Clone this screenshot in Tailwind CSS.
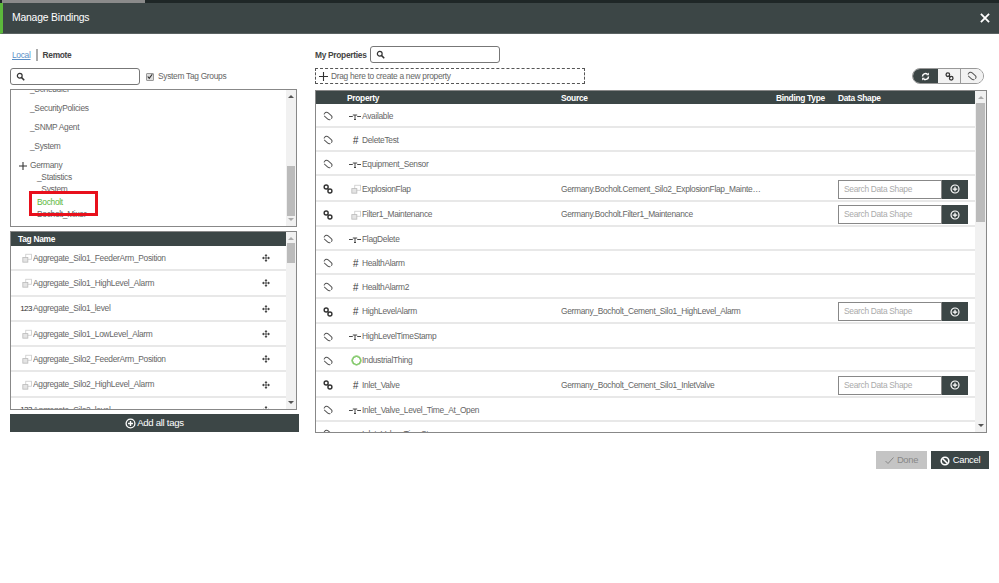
<!DOCTYPE html>
<html lang="en">
<head>
  <meta charset="UTF-8">
  <title>Manage Bindings</title>
  <script src="https://cdn.jsdelivr.net/npm/@tailwindcss/browser@4"></script>
</head>
<body class="bg-white font-['Liberation_Sans',Arial,sans-serif] text-[8.4px] tracking-[-0.3px] text-[#666]">
  <!-- shared icons -->
  <svg class="hidden">
    <symbol id="search" viewBox="0 0 12 12"><circle cx="5" cy="5" r="3.2" fill="none" stroke="currentColor" stroke-width="1.6"/><path d="M7.5 7.5 11 11" stroke="currentColor" stroke-width="2"/></symbol>
    <symbol id="unlink" viewBox="0 0 12 12"><rect x="0.8" y="3" width="10.4" height="6" rx="3" transform="rotate(40 6 6)" fill="none" stroke="#555" stroke-width="1.2" stroke-dasharray="9 1.4"/></symbol>
    <symbol id="link" viewBox="0 0 12 12"><circle cx="3.8" cy="3.6" r="2.4" fill="none" stroke="#333" stroke-width="1.7"/><circle cx="8.3" cy="8.3" r="2.4" fill="none" stroke="#333" stroke-width="1.7"/><path d="M5 5l2.200 2.200" stroke="#333" stroke-width="1.300"/></symbol>
    <symbol id="table" viewBox="0 0 12 12"><rect x="4.5" y="1.5" width="7" height="6" fill="#fff" stroke="#ccc"/><rect x="1" y="5.500" width="6" height="5.500" fill="#e4e4e4" stroke="#bbb"/></symbol>
    <symbol id="move" viewBox="0 0 12 12"><path d="M6 1v10M1 6h10" stroke="#444" stroke-width="1.300"/><path d="M6 0 3.800 3h4.400ZM6 12 3.800 9h4.400ZM0 6l3-2.200v4.400ZM12 6 9 3.800v4.400Z" fill="#444"/></symbol>
    <symbol id="pluscircle" viewBox="0 0 12 12"><circle cx="6" cy="6" r="4.800" fill="none" stroke="currentColor" stroke-width="1.400"/><path d="M6 3.300v5.400M3.300 6h5.400" stroke="currentColor" stroke-width="1.500"/></symbol>
    <symbol id="refresh" viewBox="0 0 12 12"><path d="M2 6a4 4 0 0 1 6.500-3.100M10 6a4 4 0 0 1-6.500 3.100" fill="none" stroke="#fff" stroke-width="2"/><path d="M10.500 .8v3.400H7.100ZM1.500 11.200V7.800h3.400Z" fill="#fff"/></symbol>
    <symbol id="texticon" viewBox="0 0 12 9"><path d="M0 4.500h3.800M8.200 4.500H12" fill="none" stroke="#333" stroke-width="0.900"/><path d="M3.800 3h4.400M6 3v4.500M5 7.500h2" fill="none" stroke="#333" stroke-width="0.900"/></symbol>
  </svg>

  <div class="w-[999px] h-[583px] overflow-hidden">
    <div class="h-[3px] bg-[#1f2727]"><div class="w-[143px] h-full ml-[2px] bg-[#8a8a8a]"></div></div>
    <div class="h-[31px] flex items-center justify-between bg-[#3c4646] border-l-[3px] border-l-[#5cb83c] border-b border-b-[#5a6262] pl-[9px] pr-[9px]">
      <span class="text-[10.4px] tracking-[-0.2px] text-white">Manage Bindings</span>
      <svg class="w-[10px] h-[10px]" viewBox="0 0 11 11"><path d="M1 1l9 9M10 1l-9 9" stroke="#fff" stroke-width="2"/></svg>
    </div>

    <div class="flex">
      <!-- left column -->
      <div class="ml-[10px] w-[289px] shrink-0">
        <div class="mt-[15px] h-[12px] flex items-center">
          <a class="ml-[2px] pt-[1px] text-[#5b8fc7] underline">Local</a>
          <span class="mx-[5px] w-[2px] h-[12px] bg-[#aaa]"></span>
          <span class="pt-[1px] font-bold text-[#444]">Remote</span>
        </div>
        <div class="mt-[7px] h-[17px] flex items-center">
          <div class="w-[130px] h-full border border-[#777] rounded-[3px] flex items-center pl-[5px] text-[#333]">
            <svg class="w-[9px] h-[9px]"><use href="#search"/></svg>
          </div>
          <span class="ml-[6px] w-[8px] h-[8px] bg-[#ddd] border border-[#999] rounded-[1px] flex items-center justify-center">
            <svg class="w-[7px] h-[7px]" viewBox="0 0 8 8"><path d="M1 4l2 2.500L7 1" fill="none" stroke="#333" stroke-width="1.500"/></svg>
          </span>
          <span class="ml-[4px]">System Tag Groups</span>
        </div>
        <div class="relative mt-[4px] w-[287px] h-[138px] border border-[#888] overflow-hidden">
          <div id="tree" class="relative h-[136px] overflow-hidden"></div>
          <div class="absolute right-0 top-0 bottom-0 w-[10px] bg-[#f1f1f1]">
            <div class="mt-[5px] mx-auto w-0 h-0 border-x-[3px] border-x-transparent border-b-[3px] border-b-[#555]"></div>
            <div class="absolute top-[76px] w-[8px] left-[1px] h-[50px] bg-[#bbb]"></div>
            <div class="absolute bottom-[5px] left-[2px] w-0 h-0 border-x-[3px] border-x-transparent border-t-[3px] border-t-[#aaa]"></div>
          </div>
          <div class="absolute left-[18px] top-[101px] w-[69px] h-[25px] border-[3px] border-[#e8101c]"></div>
        </div>
        <div class="relative mt-[4px] w-[287px] h-[179px] border border-[#888] overflow-hidden">
          <div class="h-[14px] w-[275px] bg-[#3c4646] text-white font-bold flex items-center pl-[7px]">Tag Name</div>
          <div id="tags" class="w-[275px]"></div>
          <div class="absolute right-0 top-0 bottom-0 w-[10px] bg-[#f1f1f1]">
            <div class="mt-[5px] mx-auto w-0 h-0 border-x-[3px] border-x-transparent border-b-[3px] border-b-[#aaa]"></div>
            <div class="absolute top-[11px] w-[8px] left-[1px] h-[20px] bg-[#bbb]"></div>
            <div class="absolute bottom-[5px] left-[2px] w-0 h-0 border-x-[3px] border-x-transparent border-t-[3px] border-t-[#555]"></div>
          </div>
        </div>
        <div class="mt-[4px] h-[18px] pt-[1px] bg-[#3c4646] text-white text-[9.6px] flex items-center justify-center gap-[1px]">
          <svg class="w-[11px] h-[11px]"><use href="#pluscircle"/></svg>Add all tags
        </div>
      </div>

      <!-- right column -->
      <div class="ml-[16px] w-[674px] shrink-0">
        <div class="mt-[12px] h-[17px] flex items-center">
          <span class="pt-[1px] font-bold text-[#444] w-[55px] whitespace-nowrap">My Properties</span>
          <div class="w-[130px] h-full border border-[#777] rounded-[3px] flex items-center pl-[5px] text-[#333]">
            <svg class="w-[9px] h-[9px]"><use href="#search"/></svg>
          </div>
        </div>
        <div class="mt-[5px] h-[16px] w-[669px] flex items-center justify-between">
          <div class="w-[270px] h-full border border-dashed border-[#555] flex items-center pl-[3px] gap-[3px]">
            <svg class="w-[9px] h-[9px]" viewBox="0 0 9 9"><path d="M4.500 0v9M0 4.500h9" stroke="#333" stroke-width="1.100"/></svg>
            <span>Drag here to create a new property</span>
          </div>
          <div class="w-[72px] h-full flex border border-[#999] rounded-full overflow-hidden">
            <div class="w-[25px] bg-[#3c4646] flex items-center justify-center"><svg class="w-[9px] h-[9px]"><use href="#refresh"/></svg></div>
            <div class="w-[23px] bg-[#f2f2f2] border-r border-[#999] flex items-center justify-center"><svg class="w-[9px] h-[9px]"><use href="#link"/></svg></div>
            <div class="flex-1 bg-[#f2f2f2] flex items-center justify-center"><svg class="w-[10px] h-[10px]"><use href="#unlink"/></svg></div>
          </div>
        </div>
        <div class="relative mt-[6px] w-[672px] h-[343px] border border-[#888] overflow-hidden">
          <div class="w-[660px] h-[13px] pt-[1px] bg-[#3c4646] text-white font-bold flex items-center">
            <span class="ml-[31px] w-[214px]">Property</span>
            <span class="w-[215px]">Source</span>
            <span class="w-[62px]">Binding Type</span>
            <span>Data Shape</span>
          </div>
          <div id="props" class="w-[660px]"></div>
          <div class="absolute right-0 top-0 bottom-0 w-[11px] bg-[#f1f1f1]">
            <div class="mt-[5px] mx-auto w-0 h-0 border-x-[3px] border-x-transparent border-b-[3px] border-b-[#aaa]"></div>
            <div class="absolute top-[12px] w-[9px] left-[1px] h-[119px] bg-[#bbb]"></div>
            <div class="absolute bottom-[5px] left-[3px] w-0 h-0 border-x-[3px] border-x-transparent border-t-[3px] border-t-[#555]"></div>
          </div>
        </div>
        <div class="mt-[18px] flex justify-end gap-[4px]">
          <div class="w-[51px] h-[18px] pt-[1px] bg-[#c4c4c4] text-[#888] text-[9.4px] flex items-center justify-center gap-[3px]">
            <svg class="w-[9px] h-[9px]" viewBox="0 0 9 9"><path d="M.5 5l2.500 2.500L8.500 1.500" fill="none" stroke="#888"/></svg>Done
          </div>
          <div class="w-[58px] h-[18px] pt-[1px] bg-[#3c4646] text-white text-[9.4px] flex items-center justify-center gap-[3px]">
            <svg class="w-[10px] h-[10px]" viewBox="0 0 10 10"><circle cx="5" cy="5" r="3.800" fill="none" stroke="#fff" stroke-width="1.600"/><path d="M2.500 2.500l5 5" stroke="#fff" stroke-width="1.600"/></svg>Cancel
          </div>
        </div>
      </div>
    </div>
  </div>

  <script>
    const tree = [
      ['_Scheduler', 30, -6, ''],
      ['_SecurityPolicies', 30, 13, ''],
      ['_SNMP Agent', 30, 32, ''],
      ['_System', 30, 51, ''],
      ['Germany', 30, 70, ''],
      ['_Statistics', 37, 82, ''],
      ['_System', 37, 94, ''],
      ['Bocholt', 37, 107, 'text-[#5cb83c]'],
      ['Bocholt_Mixer', 37, 119, '']
    ];
    document.getElementById('tree').innerHTML = tree.map(([t, x, y, c]) =>
      `<span class="absolute leading-[12px] ${c}" style="left:${x - 11}px;top:${y - 1}px">${t}</span>`
    ).join('') + `<svg class="absolute left-[8px] top-[72px] w-[8px] h-[8px]" viewBox="0 0 9 9"><path d="M4.500 0v9M0 4.500h9" stroke="#333" stroke-width="1.200"/></svg>`;

    const tags = [
      ['table', 'Aggregate_Silo1_FeederArm_Position'],
      ['table', 'Aggregate_Silo1_HighLevel_Alarm'],
      ['num', 'Aggregate_Silo1_level'],
      ['table', 'Aggregate_Silo1_LowLevel_Alarm'],
      ['table', 'Aggregate_Silo2_FeederArm_Position'],
      ['table', 'Aggregate_Silo2_HighLevel_Alarm'],
      ['num', 'Aggregate_Silo2_level']
    ];
    document.getElementById('tags').innerHTML = tags.map(([k, t]) => `
      <div class="h-[25.300px] pt-[1px] border-b-2 border-[#e8e8e8] flex items-center">
        <span class="w-[22px] flex justify-end pr-[1px] text-[#333] text-[8px] tracking-[-0.5px]">
          ${k === 'num' ? '123' : '<svg class="w-[10px] h-[10px]"><use href="#table"/></svg>'}
        </span>
        <span class="w-[229px] truncate">${t}</span>
        <svg class="w-[8px] h-[8px]"><use href="#move"/></svg>
      </div>`).join('');

    const props = [
      [24, 'unlink', 'T', 'Available', ''],
      [24, 'unlink', '#', 'DeleteTest', ''],
      [24, 'unlink', 'T', 'Equipment_Sensor', ''],
      [26, 'link', 'table', 'ExplosionFlap', 'Germany.Bocholt.Cement_Silo2_ExplosionFlap_Maintenance_Alarm'],
      [25, 'link', 'table', 'Filter1_Maintenance', 'Germany.Bocholt.Filter1_Maintenance'],
      [24, 'unlink', 'T', 'FlagDelete', ''],
      [24, 'unlink', '#', 'HealthAlarm', ''],
      [24, 'unlink', '#', 'HealthAlarm2', ''],
      [25, 'link', '#', 'HighLevelAlarm', 'Germany_Bocholt_Cement_Silo1_HighLevel_Alarm'],
      [25, 'unlink', 'T', 'HighLevelTimeStamp', ''],
      [23, 'unlink', 'ring', 'IndustrialThing', ''],
      [26, 'link', '#', 'Inlet_Valve', 'Germany_Bocholt_Cement_Silo1_InletValve'],
      [24, 'unlink', 'T', 'Inlet_Valve_Level_Time_At_Open', ''],
      [24, 'unlink', 'T', 'Inlet_Valve_TimeStamp', '']
    ];
    const typeIcon = k => {
      if (k === 'T') return `<svg class="w-[12px] h-[9px]"><use href="#texticon"/></svg>`;
      if (k === '#') return `<span class="pr-[3px] italic text-[#333] text-[10px]">#</span>`;
      if (k === 'ring') return `<span class="w-[9px] h-[9px] rounded-full border border-[#5cb83c] ring-[0.5px] ring-[#5cb83c]"></span>`;
      return `<svg class="w-[10px] h-[10px]"><use href="#table"/></svg>`;
    };
    document.getElementById('props').innerHTML = props.map(([h, b, k, n, s]) => `
      <div class="pt-[2px] border-b-2 border-[#e8e8e8] flex items-center" style="height:${h}px">
        <span class="w-[24px] flex justify-center"><svg class="w-[10px] h-[10px]"><use href="#${b}"/></svg></span>
        <span class="w-[22px] pr-[1px] flex justify-end">${typeIcon(k)}</span>
        <span class="w-[199px] truncate">${n}</span>
        <span class="w-[215px] pr-[15px] truncate">${s}</span>
        ${s ? `<span class="ml-[62px] w-[130px] h-[19px] flex">
          <span class="w-[104px] border border-[#888] bg-white text-[#aaa] flex items-center pl-[5px]">Search Data Shape</span>
          <span class="flex-1 bg-[#3c4646] text-white flex items-center justify-center"><svg class="w-[10px] h-[10px]"><use href="#pluscircle"/></svg></span>
        </span>` : ''}
      </div>`).join('');
  </script>
</body>
</html>
